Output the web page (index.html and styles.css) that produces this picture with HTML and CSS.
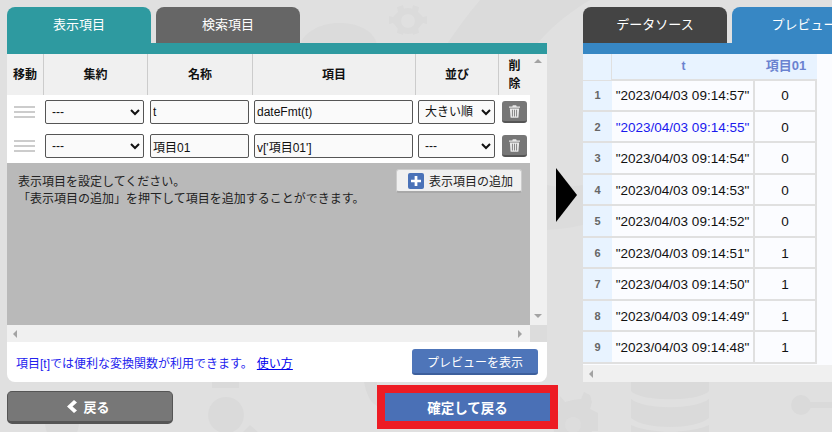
FILE: index.html
```html
<!DOCTYPE html>
<html lang="ja">
<head>
<meta charset="utf-8">
<title>表示項目</title>
<link rel="stylesheet" href="styles.css">
</head>
<body>
<svg class="backdrop" width="832" height="432" viewBox="0 0 832 432" aria-hidden="true">
  <rect width="832" height="432" fill="#e0e0e0"/>
  <path d="M447 44C458 28 468 14 480 0H590C570 12 552 26 537 44Z" fill="#dbdbdb"/>
  <path d="M300 44C306 30 322 23 340 23C360 23 374 32 377 44Z" fill="#dbdbdb"/>
  <g fill="#dbdbdb">
    <circle cx="408" cy="21" r="13"/>
    <path d="M397 7l6-2 1 4h8l1-4 6 2-1 5 5 5 4-1v8l-4-1-5 5 1 5-6 2-1-4h-8l-1 4-6-2 1-5-5-5-4 1v-8l4 1 5-5z"/>
  </g>
  <circle cx="408" cy="21" r="7" fill="#e0e0e0"/>
  <path d="M547 185C560 188 570 187 583 185V225C570 228 560 229 547 230Z" fill="#dcdcdc"/>
  <g fill="#dadada">
    <path d="M631 382H709V391C700 402 640 402 631 391Z"/>
    <path d="M631 399C645 410 695 410 709 399V418C695 430 645 430 631 418Z"/>
    <path d="M631 425C650 434 690 434 709 425V432H631Z"/>
    <circle cx="573" cy="425" r="20"/>
    <path d="M560 396l5 6 8-2 8-1 3-7 6 3 2 7-2 7 8 4v18h-40z"/>
    <circle cx="801" cy="405" r="10"/>
    <rect x="805" y="402" width="27" height="6"/>
    <circle cx="226" cy="415" r="18"/>
    <rect x="212" y="382" width="27" height="6"/>
    <path d="M243 432l7-7 8 7z"/>
    <circle cx="62" cy="424" r="17"/>
    <path d="M364 382h13v24c-8-4-11-14-13-24z"/>
  </g>
  <circle cx="573" cy="425" r="8" fill="#e0e0e0" opacity="0.6"/>
</svg>

<main class="page">
  <section class="left">
    <nav class="tabs">
      <div class="tab tab-teal">表示項目</div>
      <div class="tab tab-gray">検索項目</div>
    </nav>
    <div class="bar bar-teal"></div>
    <div class="panel">
      <div class="grid-area">
        <div class="grid-main">
          <div class="head">
            <div class="hc">移動</div>
            <div class="hc">集約</div>
            <div class="hc">名称</div>
            <div class="hc">項目</div>
            <div class="hc">並び</div>
            <div class="hc hc-del">削<br>除</div>
          </div>
          <div class="row">
            <div class="handle"><i></i><i></i><i></i></div>
            <select class="ctl sel sel-agg"><option>---</option></select>
            <input class="ctl inp inp-name" value="t">
            <input class="ctl inp inp-item" value="dateFmt(t)">
            <select class="ctl sel sel-sort"><option>大きい順</option></select>
            <button class="trash" aria-label="削除"><svg width="11" height="13" viewBox="0 0 13 15"><path fill="#e8e8e8" d="M4.500 0h4l.6 1.500H13V3H0V1.500h3.900zM1 4h11l-.8 10.200a.9.900 0 0 1-.9.800H2.700a.9.900 0 0 1-.9-.800zm2.500 1.500v8h1v-8zm2.500 0v8h1v-8zm2.500 0v8h1v-8z"/></svg></button>
          </div>
          <div class="row">
            <div class="handle"><i></i><i></i><i></i></div>
            <select class="ctl sel sel-agg"><option>---</option></select>
            <input class="ctl inp inp-name" value="項目01">
            <input class="ctl inp inp-item" value="v['項目01']">
            <select class="ctl sel sel-sort"><option>---</option></select>
            <button class="trash" aria-label="削除"><svg width="11" height="13" viewBox="0 0 13 15"><path fill="#e8e8e8" d="M4.500 0h4l.6 1.500H13V3H0V1.500h3.900zM1 4h11l-.8 10.200a.9.900 0 0 1-.9.800H2.700a.9.900 0 0 1-.9-.800zm2.500 1.500v8h1v-8zm2.500 0v8h1v-8zm2.500 0v8h1v-8z"/></svg></button>
          </div>
          <div class="empty">
            <p class="hint">表示項目を設定してください。<br>「表示項目の追加」を押下して項目を追加することができます。</p>
            <button class="add"><span class="plus"><svg width="10" height="10" viewBox="0 0 11 11"><path fill="#fff" d="M4 0h3v4h4v3H7v4H4V7H0V4h4z"/></svg></span>表示項目の追加</button>
          </div>
        </div>
        <div class="vscroll"><span class="arr arr-up"></span><span class="arr arr-down"></span></div>
      </div>
      <div class="hscroll">
        <span class="arr arr-left"></span>
        <span class="arr arr-right"></span>
        <span class="corner"></span>
      </div>
      <div class="foot">
        <p class="note">項目[t]では便利な変換関数が利用できます。<a href="#">使い方</a></p>
        <button class="preview">プレビューを表示</button>
      </div>
    </div>
    <div class="actions">
      <button class="back"><svg width="11" height="13" viewBox="0 0 11 13"><path fill="#fff" d="M7 0l3 2.500L5.500 6.500 10 10.500 7 13 0 6.500z"/></svg>戻る</button>
      <div class="confirm-frame"><button class="confirm">確定して戻る</button></div>
    </div>
  </section>

  <div class="arrow-col"><div class="arrow"></div></div>

  <section class="right">
    <nav class="tabs">
      <div class="tab tab-dark">データソース</div>
      <div class="tab tab-blue">プレビュー</div>
    </nav>
    <div class="bar bar-blue"></div>
    <div class="result">
      <div class="r-head"><div class="r-n"></div><div class="r-t">t</div><div class="r-v">項目01</div></div>
      <div class="r-row"><div class="r-n">1</div><div class="r-t">"2023/04/03 09:14:57"</div><div class="r-v">0</div></div>
      <div class="r-row r-link"><div class="r-n">2</div><div class="r-t">"2023/04/03 09:14:55"</div><div class="r-v">0</div></div>
      <div class="r-row"><div class="r-n">3</div><div class="r-t">"2023/04/03 09:14:54"</div><div class="r-v">0</div></div>
      <div class="r-row"><div class="r-n">4</div><div class="r-t">"2023/04/03 09:14:53"</div><div class="r-v">0</div></div>
      <div class="r-row"><div class="r-n">5</div><div class="r-t">"2023/04/03 09:14:52"</div><div class="r-v">0</div></div>
      <div class="r-row"><div class="r-n">6</div><div class="r-t">"2023/04/03 09:14:51"</div><div class="r-v">1</div></div>
      <div class="r-row"><div class="r-n">7</div><div class="r-t">"2023/04/03 09:14:50"</div><div class="r-v">1</div></div>
      <div class="r-row"><div class="r-n">8</div><div class="r-t">"2023/04/03 09:14:49"</div><div class="r-v">1</div></div>
      <div class="r-row"><div class="r-n">9</div><div class="r-t">"2023/04/03 09:14:48"</div><div class="r-v">1</div></div>
    </div>
    <div class="r-scroll"><span class="arr arr-left"></span></div>
  </section>
</main>
</body>
</html>
```

FILE: styles.css
```css
* { box-sizing: border-box; }
html, body { margin: 0; height: 100%; overflow: hidden; }
body {
  width: 832px;
  height: 432px;
  background: #e0e0e0;
  position: relative;
  font-family: "Liberation Sans", "Noto Sans CJK JP", sans-serif;
  font-size: 12px;
  color: #111;
}
.backdrop { position: absolute; left: 0; top: 0; }
.page {
  position: relative;
  display: flex;
  width: 832px;
  height: 432px;
  padding: 7px 0 0 7px;
  overflow: hidden;
}
.left { width: 540px; flex: none; }
.arrow-col { width: 36px; flex: none; height: 375px; display: flex; padding: 161px 0 0 9px; }
.arrow {
  width: 0;
  height: 0;
  border-left: 21px solid #000;
  border-top: 27px solid transparent;
  border-bottom: 27px solid transparent;
}
.right { width: 249px; flex: none; overflow: hidden; }

.tabs { display: flex; gap: 5px; height: 36px; }
.tab {
  width: 144px;
  flex: none;
  height: 36px;
  line-height: 36px;
  text-align: center;
  font-size: 13px;
  color: #fff;
  border-radius: 8px 8px 0 0;
}
.tab-teal { background: #2e9aa0; }
.tab-gray { background: #666; }
.tab-dark { background: #444; }
.tab-blue { background: #3787c4; }
.bar { height: 11px; }
.bar-teal { background: #2e9aa0; }
.bar-blue { background: #3787c4; }

.panel {
  background: #fff;
  height: 328px;
  border-radius: 0 0 8px 8px;
  overflow: hidden;
}
.grid-area { display: flex; height: 271px; }
.grid-main { width: 523px; flex: none; display: flex; flex-direction: column; }
.vscroll {
  width: 17px;
  flex: none;
  background: #f0f0f0;
  position: relative;
}
.arr { position: absolute; width: 0; height: 0; border: 4px solid transparent; }
.arr-up { left: 4px; top: 5px; border-top-width: 0; border-bottom: 4px solid #a3a3a3; }
.arr-down { left: 4px; bottom: 7px; border-bottom-width: 0; border-top: 4px solid #a3a3a3; }
.arr-left { left: 6px; top: 5px; border-left-width: 0; border-right: 4px solid #a3a3a3; }
.arr-right { right: 25px; top: 5px; border-right-width: 0; border-left: 4px solid #a3a3a3; }

.head {
  display: grid;
  grid-template-columns: 37px 104px 105px 163px 83px 31px;
  height: 41px;
  background: #f0f0f0;
}
.hc {
  display: flex;
  align-items: center;
  justify-content: center;
  text-align: center;
  font-size: 12px;
  font-weight: 700;
  line-height: 18px;
  color: #111;
  border-right: 1px solid #ccc;
}
.hc-del { border-right: 0; }
.row {
  display: flex;
  align-items: center;
  height: 34px;
}
.handle {
  width: 38px;
  flex: none;
  display: flex;
  flex-direction: column;
  gap: 3px;
  padding: 0 7px;
}
.handle i { display: block; height: 2px; width: 21px; background: #ccc; }
.ctl {
  height: 24px;
  border: 1px solid #555;
  border-radius: 2px;
  background: #fafafa;
  font: 12px "Liberation Sans", "Noto Sans CJK JP", sans-serif;
  color: #111;
  flex: none;
  padding: 0 3px;
  margin: 0;
}
.inp { padding: 0 2px; }
.sel-agg { width: 99px; margin-right: 6px; padding-left: 2px; }
.inp-name { width: 99px; margin-right: 5px; }
.inp-item { width: 159px; margin-right: 5px; }
.sel-sort { width: 77px; margin-right: 7px; padding-left: 2px; }
.trash {
  width: 25px;
  height: 22px;
  flex: none;
  border: 0;
  border-bottom: 2px solid #555;
  border-radius: 3px;
  background: #777;
  padding: 0;
  display: flex;
  align-items: center;
  justify-content: center;
}
.empty {
  flex: 1;
  background: #b9b9b9;
  display: flex;
  justify-content: space-between;
  align-items: flex-start;
  padding: 6px 8px 0 11px;
}
.hint { margin: 5px 0 0; font-size: 12px; line-height: 17px; color: #222; }
.add {
  width: 126px;
  height: 24px;
  background: #f0f0f0;
  border: 1px solid #ccc;
  border-bottom: 2px solid #a8a8a8;
  border-radius: 3px;
  padding: 0 0 0 11px;
  display: flex;
  align-items: center;
  gap: 5px;
  font: 12px "Liberation Sans", "Noto Sans CJK JP", sans-serif;
  color: #222;
}
.plus {
  width: 16px;
  height: 16px;
  background: #4a72b8;
  border-radius: 2px;
  display: flex;
  align-items: center;
  justify-content: center;
}
.hscroll { height: 17px; background: #f0f0f0; position: relative; }
.corner { position: absolute; right: 0; top: 0; width: 17px; height: 17px; background: #dcdcdc; }
.foot {
  display: flex;
  align-items: center;
  justify-content: space-between;
  height: 40px;
  padding: 0 9px;
}
.note { margin: 0; font-size: 12px; color: #2222ee; }
.note a { color: #0000ee; text-decoration: underline; margin-left: 4px; }
.preview {
  width: 126px;
  height: 26px;
  background: #4e75b9;
  border: 0;
  border-bottom: 2px solid #3d5f9c;
  border-radius: 3px;
  color: #fff;
  font: 12px "Liberation Sans", "Noto Sans CJK JP", sans-serif;
  padding: 0;
}
.actions {
  display: flex;
  justify-content: space-between;
  align-items: flex-start;
  padding: 3px 0 0 0;
  margin-right: -11px;
}
.back {
  margin-top: 6px;
  width: 166px;
  height: 33px;
  background: #777;
  border: 1px solid #555;
  border-bottom: 3px solid #555;
  border-radius: 5px;
  color: #fff;
  font: 700 13px "Liberation Sans", "Noto Sans CJK JP", sans-serif;
  display: flex;
  align-items: center;
  justify-content: center;
  gap: 5px;
  padding: 0 3px 0 0;
}
.confirm-frame { border: 8px solid #ed1c24; width: 181px; height: 44px; }
.confirm {
  display: block;
  width: 100%;
  height: 100%;
  background: #4a70b6;
  border: 0;
  color: #fff;
  font: 700 13.5px "Liberation Sans", "Noto Sans CJK JP", sans-serif;
  padding: 0;
}

.result { height: 311px; background: #fbfcff; overflow: hidden; }
.r-head, .r-row { display: flex; width: 234px; }
.r-head { height: 26px; line-height: 24px; background: #e8f3ff; font-weight: 700; color: #6a82d0; font-size: 12px; }
.r-head .r-v { font-size: 13px; }
.r-row { height: 31.44px; line-height: 31px; border-bottom: 2px solid #e0e0e0; font-size: 13.5px; color: #111; }
.r-row:nth-child(2) { border-top: 2px solid #e0e0e0; height: 33px; line-height: 29px; margin-top: -1px; }
.r-n { width: 29px; flex: none; text-align: center; background: #e8f3ff; font-size: 11px; font-weight: 700; color: #666; }
.r-head .r-n { border-right: 1px solid #e0e0e0; }
.r-t { width: 143px; flex: none; text-align: center; white-space: nowrap; border-right: 2px solid #e0e0e0; }
.r-head .r-t { border-right: 0; }
.r-v { width: 62px; flex: none; text-align: center; border-right: 2px solid #e0e0e0; }
.r-head .r-v { border-right: 0; }
.r-link .r-t { color: #1a1aee; }
.r-scroll { height: 17px; background: #f0f0f0; position: relative; }
```
